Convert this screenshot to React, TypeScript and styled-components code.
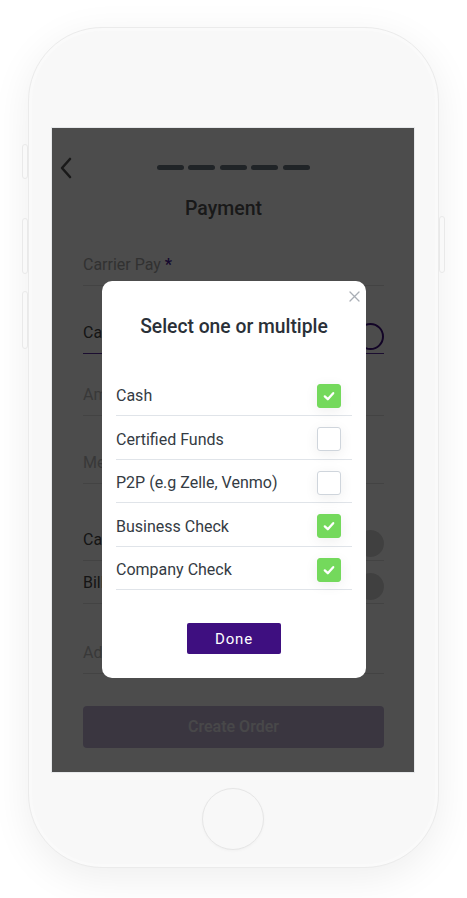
import * as React from 'react';
import styled, { createGlobalStyle } from 'styled-components';

interface FieldProps {
  readonly h: number;
  readonly active?: boolean;
}

interface TextProps {
  readonly tone: 'label' | 'value' | 'hint';
}

interface KnobProps {
  readonly outline?: boolean;
}

interface CheckProps {
  readonly checked: boolean;
}

const options = [
  { label: 'Cash', checked: true },
  { label: 'Certified Funds', checked: false },
  { label: 'P2P (e.g Zelle, Venmo)', checked: false },
  { label: 'Business Check', checked: true },
  { label: 'Company Check', checked: true },
];

const App = () => {
  const [picked, setPicked] = React.useState(options.map((o) => o.checked));
  const toggle = (i: number) =>
    setPicked((p) => p.map((v, j) => (j === i ? !v : v)));

  return (
    <Stage>
      <GlobalStyle />
      <Phone>
        <SideKey side="left" top={116} h={35} />
        <SideKey side="left" top={190} h={56} />
        <SideKey side="left" top={263} h={58} />
        <SideKey side="right" top={188} h={57} />
        <Screen>
          <Header>
            <Back>
              <svg width="14" height="22" viewBox="0 0 14 22">
                <polyline points="11,2 3,11 11,20" fill="none" stroke="#555" strokeWidth="2.6" strokeLinecap="round" strokeLinejoin="round" />
              </svg>
            </Back>
            <Steps>
              {[0, 1, 2, 3, 4].map((i) => (
                <Step key={i} />
              ))}
            </Steps>
            <span />
          </Header>
          <Title>Payment</Title>
          <Form>
            <Field h={66}>
              <Text tone="label">
                Carrier Pay <Star>*</Star>
              </Text>
            </Field>
            <Field h={68} active>
              <Text tone="value">Cash</Text>
              <Knob outline />
            </Field>
            <Field h={62}>
              <Text tone="hint">Amount</Text>
            </Field>
            <Field h={68}>
              <Text tone="hint">Memo</Text>
            </Field>
            <Field h={77}>
              <Text tone="value">Carrier Fees</Text>
              <Knob />
            </Field>
            <Field h={43}>
              <Text tone="value">Bill Shipper</Text>
              <Knob />
            </Field>
            <Field h={70}>
              <Text tone="hint">Add Notes</Text>
            </Field>
            <CreateButton>Create Order</CreateButton>
          </Form>
          <Overlay />
          <Modal>
            <Close aria-label="close">
              <svg width="11" height="11" viewBox="0 0 11 11">
                <path d="M1 1 L10 10 M10 1 L1 10" stroke="#a9aeb5" strokeWidth="1.3" strokeLinecap="round" />
              </svg>
            </Close>
            <ModalTitle>Select one or multiple</ModalTitle>
            <List>
              {options.map((o, i) => (
                <Row key={o.label} onClick={() => toggle(i)}>
                  <RowLabel>{o.label}</RowLabel>
                  <Box checked={picked[i]}>
                    {picked[i] && (
                      <svg width="14" height="14" viewBox="0 0 14 14">
                        <polyline points="2.8,7.4 5.8,10.2 11.2,4.2" fill="none" stroke="#fff" strokeWidth="2.3" strokeLinecap="round" strokeLinejoin="round" />
                      </svg>
                    )}
                  </Box>
                </Row>
              ))}
            </List>
            <DoneButton>Done</DoneButton>
          </Modal>
        </Screen>
        <HomeButton />
      </Phone>
    </Stage>
  );
};

const GlobalStyle = createGlobalStyle`
  html, body {
    margin: 0;
    background: #ffffff;
    font-family: Roboto, "Liberation Sans", sans-serif;
  }
  * { box-sizing: border-box; }
`;

const Stage = styled.div`
  width: 467px;
  height: 898px;
  display: flex;
  justify-content: center;
  padding-top: 27px;
`;

const Phone = styled.div`
  position: relative;
  width: 411px;
  height: 841px;
  margin-left: -1px;
  border-radius: 74px;
  background: #f8f8f8;
  border: 1.5px solid #ebebeb;
  box-shadow: 0 10px 40px rgba(0, 0, 0, 0.07), inset 0 0 0 3px #fafafa;
  display: flex;
  flex-direction: column;
  align-items: center;
  padding-top: 98.5px;
`;

const SideKey = styled.div<{ side: 'left' | 'right'; top: number; h: number }>`
  position: absolute;
  top: ${(p) => p.top}px;
  ${(p) => (p.side === 'left' ? 'left: -7px;' : 'right: -7px;')}
  width: 6px;
  height: ${(p) => p.h}px;
  border: 1px solid #e9e9e9;
  border-radius: 3px;
  background: #f9f9f9;
`;

const Screen = styled.div`
  position: relative;
  width: 364px;
  height: 646px;
  background: #ffffff;
  border: 1px solid #e6e8ea;
  overflow: hidden;
  display: flex;
  flex-direction: column;
`;

const Header = styled.div`
  display: grid;
  grid-template-columns: 40px 1fr 40px;
  align-items: center;
  height: 26px;
  margin-top: 27px;
`;

const Back = styled.div`
  display: flex;
  align-items: center;
  padding-left: 7px;
`;

const Steps = styled.div`
  display: flex;
  justify-content: center;
  gap: 4.5px;
`;

const Step = styled.span`
  width: 27px;
  height: 5px;
  border-radius: 3px;
  background: #6b7882;
`;

const Title = styled.h1`
  margin: 16px 0 0;
  padding-right: 19px;
  text-align: center;
  font-size: 19.5px;
  line-height: 24px;
  font-weight: 500;
  color: #555;
`;

const Form = styled.div`
  display: flex;
  flex-direction: column;
  padding: 0 30px 0 31px;
  margin-top: -1px;
`;

const Field = styled.div<FieldProps>`
  height: ${(p) => p.h}px;
  display: flex;
  align-items: flex-end;
  justify-content: space-between;
  gap: 8px;
  padding-bottom: 9px;
  border-bottom: 1px solid ${(p) => (p.active ? '#5a2ea0' : '#e2e2e2')};
`;

const Text = styled.span<TextProps>`
  flex: 1;
  min-width: 0;
  font-size: 16px;
  line-height: 22px;
  white-space: nowrap;
  color: ${(p) => (p.tone === 'label' ? '#a6a6a6' : p.tone === 'value' ? '#474747' : '#bcbcbc')};
`;

const Star = styled.span`
  color: #4a1d9a;
  font-weight: 700;
`;

const Knob = styled.span<KnobProps>`
  width: 27px;
  height: 27px;
  border-radius: 50%;
  margin-bottom: -6px;
  flex-shrink: 0;
  background: ${(p) => (p.outline ? 'transparent' : '#d8d8d8')};
  border: ${(p) => (p.outline ? '2px solid #3d0f80' : 'none')};
`;

const CreateButton = styled.button`
  margin-top: 32px;
  height: 42px;
  border: none;
  border-radius: 4px;
  background: #c3b6d8;
  color: #f2f0f6;
  font-family: inherit;
  font-size: 16px;
  font-weight: 500;
`;

const Overlay = styled.div`
  position: absolute;
  inset: 0;
  background: rgba(0, 0, 0, 0.7);
`;

const Modal = styled.div`
  position: absolute;
  left: 50px;
  top: 153.5px;
  width: 264px;
  background: #ffffff;
  border-radius: 10px;
  padding: 33.5px 14px 24px;
  display: flex;
  flex-direction: column;
  align-items: stretch;
`;

const Close = styled.button`
  position: absolute;
  top: 10px;
  right: 6px;
  padding: 0;
  border: none;
  background: none;
  display: flex;
`;

const ModalTitle = styled.h2`
  margin: 0;
  text-align: center;
  font-size: 19.3px;
  line-height: 24px;
  font-weight: 500;
  color: #2a3038;
`;

const List = styled.div`
  margin-top: 34px;
  display: flex;
  flex-direction: column;
`;

const Row = styled.div`
  height: 43.5px;
  padding-top: 4px;
  display: flex;
  align-items: center;
  justify-content: space-between;
  border-bottom: 1px solid #e0e4e9;
  cursor: pointer;
`;

const RowLabel = styled.span`
  font-size: 16px;
  color: #343b43;
`;

const Box = styled.span<CheckProps>`
  width: 24px;
  height: 24px;
  margin-right: 11px;
  border-radius: 3px;
  display: flex;
  align-items: center;
  justify-content: center;
  background: ${(p) => (p.checked ? '#74d95c' : '#ffffff')};
  border: 1px solid ${(p) => (p.checked ? '#74d95c' : '#cfd5dc')};
  box-shadow: 0 3px 14px rgba(0, 0, 0, 0.07);
`;

const DoneButton = styled.button`
  align-self: center;
  margin-top: 33px;
  width: 94px;
  height: 31px;
  border: none;
  border-radius: 2px;
  background: #3e0f80;
  color: #ffffff;
  font-family: inherit;
  font-size: 15px;
  font-weight: 400;
  letter-spacing: 0.8px;
`;

const HomeButton = styled.div`
  margin-top: 15px;
  width: 62px;
  height: 62px;
  border-radius: 50%;
  background: #f8f8f8;
  border: 1px solid #e6e6e6;
  box-shadow: 0 1px 3px rgba(0, 0, 0, 0.03);
`;

export default App;
